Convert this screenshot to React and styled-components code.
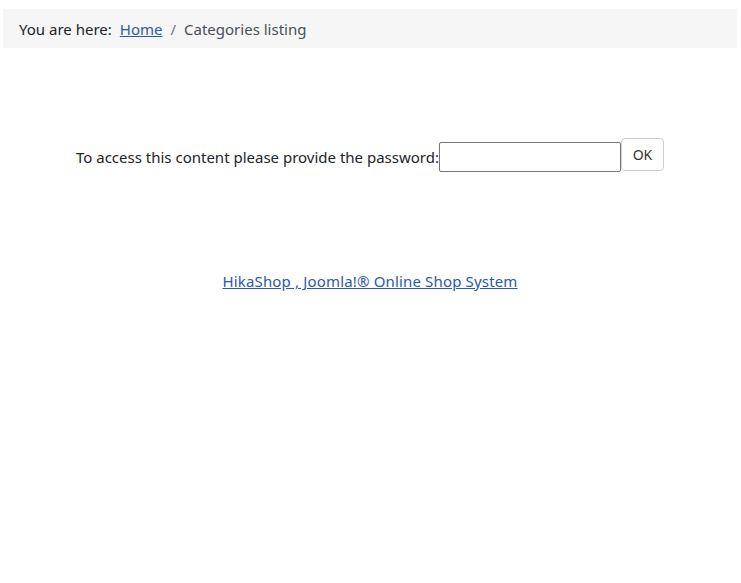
import React from "react";
import styled, { createGlobalStyle } from "styled-components";

const Global = createGlobalStyle`
  html, body { margin: 0; padding: 0; background: #fff; }
  body { font-family: "Noto Sans", "Open Sans", sans-serif; font-size: 15px; color: #212529; }
`;

const Page = styled.div`
  padding: 9px 4px 0 3px;
`;

const Breadcrumb = styled.nav`
  display: flex;
  align-items: center;
  height: 39px;
  padding: 0 16px;
  background: #f6f6f6;
  color: #212529;
`;

const Label = styled.span`
  margin-right: 8px;
`;

const Crumb = styled.a`
  color: #2a58b0;
  text-decoration: underline;
`;

const Sep = styled.span`
  color: #6c757d;
  margin: 0 8px;
`;

const Current = styled.span`
  color: #495057;
`;

const Form = styled.form`
  display: flex;
  justify-content: center;
  align-items: flex-start;
  margin-top: 90px;
`;

const Prompt = styled.label`
  color: #212529;
  line-height: 20px;
  margin-top: 9px;
`;

const Input = styled.input`
  box-sizing: border-box;
  width: 182px;
  height: 30px;
  margin-top: 4px;
  border: 1px solid #767676;
  border-radius: 2px;
  padding: 1px 2px;
`;

const Button = styled.button`
  box-sizing: border-box;
  width: 43px;
  height: 33px;
  background: #fff;
  border: 1px solid #cfcfcf;
  border-radius: 4px;
  font-family: inherit;
  font-size: 14px;
  color: #333;
`;

const Footer = styled.div`
  text-align: center;
  margin-top: 99px;
`;

const FooterLink = styled.a`
  color: #2a58b0;
  text-decoration: underline;
  letter-spacing: 0.16px;
`;

export default function App() {
  return (
    <>
      <Global />
      <Page>
        <Breadcrumb>
          <Label>You are here:</Label>
          <Crumb href="#">Home</Crumb>
          <Sep>/</Sep>
          <Current>Categories listing</Current>
        </Breadcrumb>
        <Form onSubmit={(e) => e.preventDefault()}>
          <Prompt>To access this content please provide the password:</Prompt>
          <Input type="password" />
          <Button type="submit">OK</Button>
        </Form>
        <Footer>
          <FooterLink href="#">HikaShop , Joomla!® Online Shop System</FooterLink>
        </Footer>
      </Page>
    </>
  );
}
